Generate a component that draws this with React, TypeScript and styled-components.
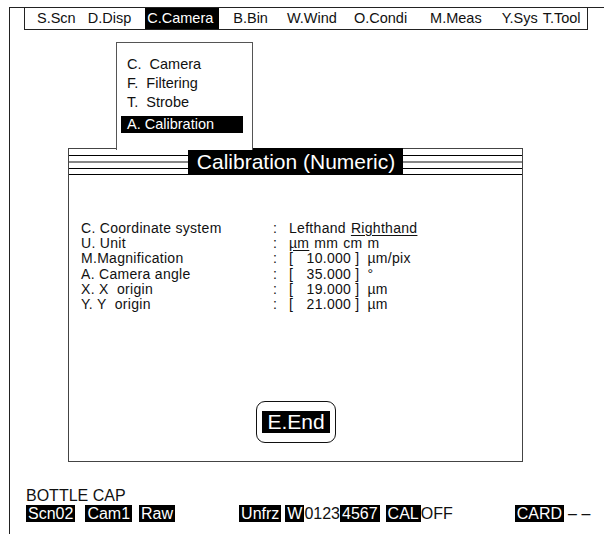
import styled, { createGlobalStyle } from "styled-components";

const GlobalStyle = createGlobalStyle`
    html, body {
        margin: 0;
        padding: 0;
        background: #ffffff;
    }
    body {
        font-family: "Liberation Sans", Arial, Helvetica, sans-serif;
        color: #111;
        font-size: 14px;
    }
`;

const Screen = styled.div`
    position: relative;
    margin: 7px 0 0 9px;
    height: 527px;
    border-left: 1px solid #222;
    border-top: 1px solid #222;
    display: flex;
    flex-direction: column;
    box-sizing: border-box;
`;

const MenuBar = styled.div`
    display: flex;
    align-items: stretch;
    width: 564px;
    height: 22px;
    margin-left: 14px;
    padding-left: 12px;
    box-sizing: border-box;
    border: 1px solid #222;
    border-top: none;
    line-height: 20px;
    font-size: 14.5px;
`;

const MenuItem = styled.span<{ $gap: number; $active?: boolean }>`
    margin-left: ${(p) => p.$gap}px;
    padding: ${(p) => (p.$active ? "0 6px 0 2px" : "0")};
    background: ${(p) => (p.$active ? "#000" : "transparent")};
    color: ${(p) => (p.$active ? "#fff" : "#111")};
    white-space: nowrap;
`;

const Dropdown = styled.div`
    position: absolute;
    left: 106px;
    top: 34px;
    width: 137px;
    height: 108px;
    box-sizing: border-box;
    border: 1px solid #555;
    border-bottom: none;
    background: #fff;
    padding: 12px 0 0 4px;
    font-size: 14.5px;
    z-index: 2;
`;

const DropItem = styled.div<{ $active?: boolean }>`
    width: 122px;
    box-sizing: border-box;
    padding: 0 6px;
    line-height: ${(p) => (p.$active ? 17 : 19)}px;
    margin-top: ${(p) => (p.$active ? 4 : 0)}px;
    background: ${(p) => (p.$active ? "#000" : "transparent")};
    color: ${(p) => (p.$active ? "#fff" : "#111")};
    white-space: pre;
`;

const Dialog = styled.div`
    margin: 118px 0 0 58px;
    width: 455px;
    height: 314px;
    box-sizing: border-box;
    border: 1px solid #444;
    display: flex;
    flex-direction: column;
`;

const TitleBand = styled.div`
    display: flex;
    height: 26px;
`;

const Rule = styled.div`
    flex: 1;
    background:
        linear-gradient(#000, #000) 0 6px / 100% 1px no-repeat,
        linear-gradient(#888, #888) 0 12px / 100% 2px no-repeat,
        linear-gradient(#000, #000) 0 19px / 100% 1px no-repeat,
        linear-gradient(#000, #000) 0 25px / 100% 1px no-repeat;
`;

const Title = styled.div`
    margin-top: -1px;
    height: 27px;
    padding: 0 8px 0 9px;
    background: #000;
    color: #fff;
    font-size: 21px;
    line-height: 27px;
    white-space: nowrap;
`;

const Fields = styled.div`
    display: grid;
    grid-template-columns: 192px 16px auto;
    grid-auto-rows: 15.2px;
    line-height: 15px;
    font-size: 14px;
    letter-spacing: 0.3px;
    padding: 46px 0 0 12px;
`;

const Label = styled.span`
    white-space: pre;
`;

const Colon = styled.span``;

const Value = styled.span`
    display: flex;
    white-space: pre;
`;

const Choice = styled.span<{ $selected?: boolean }>`
    margin-right: 5px;
    text-decoration: ${(p) => (p.$selected ? "underline" : "none")};
    text-underline-offset: 2px;
`;

const NumberBox = styled.span`
    width: 58px;
    text-align: right;
`;

const Bracket = styled.span<{ $close?: boolean }>`
    margin-left: ${(p) => (p.$close ? 4 : 0)}px;
`;

const Unit = styled.span`
    margin-left: 8px;
`;

const Spacer = styled.div`
    flex: 1;
`;

const EndButton = styled.div`
    align-self: center;
    margin: 0 0 18px 1px;
    padding: 9px 5px;
    border: 1.5px solid #111;
    border-radius: 9px;
`;

const EndLabel = styled.div`
    background: #000;
    color: #fff;
    font-size: 21px;
    line-height: 22px;
    padding: 0 5px;
`;

const SceneName = styled.div`
    margin: 26px 0 0 16px;
    font-size: 16px;
    line-height: 16px;
`;

const StatusRow = styled.div`
    display: flex;
    margin: 1px 0 0 16px;
    font-size: 16px;
    line-height: 17px;
`;

const Tag = styled.span<{ $gap?: number; $dark?: boolean }>`
    margin-left: ${(p) => p.$gap ?? 0}px;
    padding: 0 ${(p) => (p.$dark ? 2 : 0)}px;
    background: ${(p) => (p.$dark ? "#000" : "transparent")};
    color: ${(p) => (p.$dark ? "#fff" : "#111")};
    white-space: pre;
`;

const menu = [
    { label: "S.Scn", gap: 0 },
    { label: "D.Disp", gap: 12 },
    { label: "C.Camera", gap: 14, active: true },
    { label: "B.Bin", gap: 14 },
    { label: "W.Wind", gap: 19 },
    { label: "O.Condi", gap: 17 },
    { label: "M.Meas", gap: 23 },
    { label: "Y.Sys", gap: 20 },
    { label: "T.Tool", gap: 5 }
];

const dropItems = ["C.  Camera", "F.  Filtering", "T.  Strobe"];

function Numeric({ value, unit }: { value: string; unit: string }) {
    return (
        <Value>
            <Bracket>[</Bracket>
            <NumberBox>{value}</NumberBox>
            <Bracket $close>]</Bracket>
            <Unit>{unit}</Unit>
        </Value>
    );
}

export default function App() {
    return (
        <>
            <GlobalStyle />
            <Screen>
                <MenuBar>
                    {menu.map((m) => (
                        <MenuItem key={m.label} $gap={m.gap} $active={m.active}>
                            {m.label}
                        </MenuItem>
                    ))}
                </MenuBar>

                <Dropdown>
                    {dropItems.map((d) => (
                        <DropItem key={d}>{d}</DropItem>
                    ))}
                    <DropItem $active>A. Calibration</DropItem>
                </Dropdown>

                <Dialog>
                    <TitleBand>
                        <Rule />
                        <Title>Calibration (Numeric)</Title>
                        <Rule />
                    </TitleBand>
                    <Fields>
                        <Label>C. Coordinate system</Label>
                        <Colon>:</Colon>
                        <Value>
                            <Choice>Lefthand</Choice>
                            <Choice $selected>Righthand</Choice>
                        </Value>

                        <Label>U. Unit</Label>
                        <Colon>:</Colon>
                        <Value>
                            <Choice $selected>µm</Choice>
                            <Choice>mm</Choice>
                            <Choice>cm</Choice>
                            <Choice>m</Choice>
                        </Value>

                        <Label>M.Magnification</Label>
                        <Colon>:</Colon>
                        <Numeric value="10.000" unit="µm/pix" />

                        <Label>A. Camera angle</Label>
                        <Colon>:</Colon>
                        <Numeric value="35.000" unit="°" />

                        <Label>X. X  origin</Label>
                        <Colon>:</Colon>
                        <Numeric value="19.000" unit="µm" />

                        <Label>Y. Y  origin</Label>
                        <Colon>:</Colon>
                        <Numeric value="21.000" unit="µm" />
                    </Fields>
                    <Spacer />
                    <EndButton>
                        <EndLabel>E.End</EndLabel>
                    </EndButton>
                </Dialog>

                <SceneName>BOTTLE CAP</SceneName>
                <StatusRow>
                    <Tag $dark>Scn02</Tag>
                    <Tag $dark $gap={10}>Cam1</Tag>
                    <Tag $dark $gap={7}>Raw</Tag>
                    <Tag $dark $gap={64}>Unfrz</Tag>
                    <Tag $dark $gap={4}>W</Tag>
                    <Tag>0123</Tag>
                    <Tag $dark>4567</Tag>
                    <Tag $dark $gap={6}>CAL</Tag>
                    <Tag>OFF</Tag>
                    <Tag $dark $gap={62}>CARD</Tag>
                    <Tag $gap={4}>– –</Tag>
                </StatusRow>
            </Screen>
        </>
    );
}
